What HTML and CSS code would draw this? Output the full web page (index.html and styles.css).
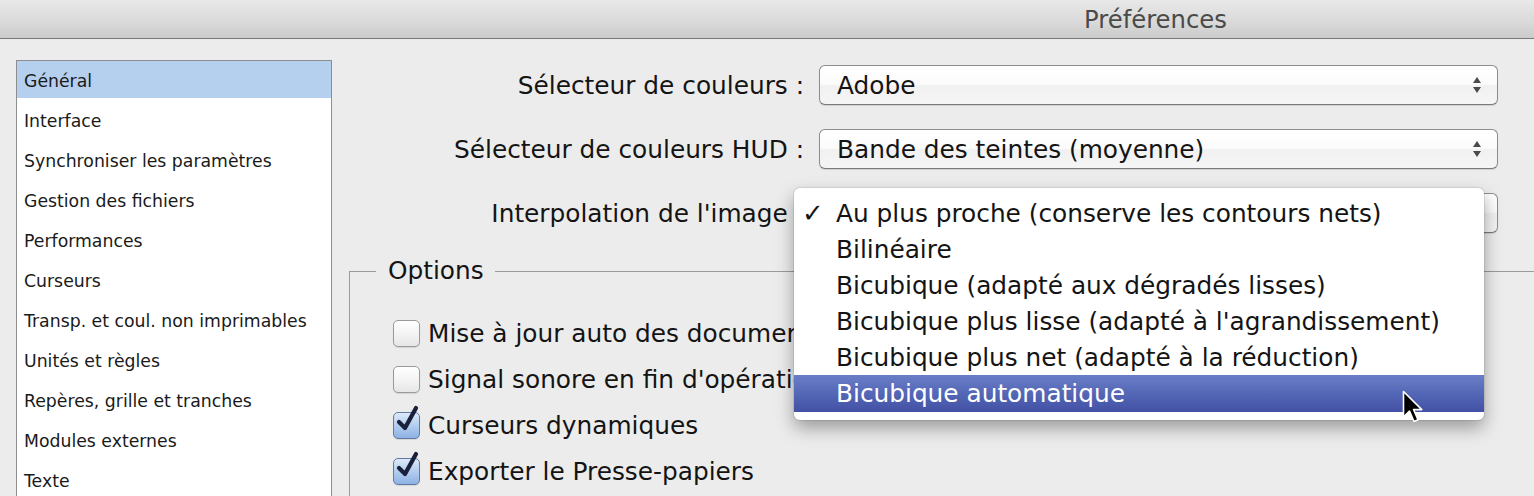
FILE: index.html
```html
<!DOCTYPE html>
<html lang="fr">
<head>
<meta charset="utf-8">
<title>Préférences</title>
<link rel="stylesheet" href="styles.css">
</head>
<body>
<div class="window">
  <header class="titlebar"><span class="title">Préférences</span></header>
  <div class="content">
    <ul class="sidebar">
      <li class="item selected">Général</li>
      <li class="item">Interface</li>
      <li class="item">Synchroniser les paramètres</li>
      <li class="item">Gestion des fichiers</li>
      <li class="item">Performances</li>
      <li class="item">Curseurs</li>
      <li class="item">Transp. et coul. non imprimables</li>
      <li class="item">Unités et règles</li>
      <li class="item">Repères, grille et tranches</li>
      <li class="item">Modules externes</li>
      <li class="item">Texte</li>
    </ul>
    <main class="main">
      <div class="form">
        <label class="label">Sélecteur de couleurs :</label>
        <div class="select"><span class="value">Adobe</span>
          <svg class="arrows" width="10" height="18" viewBox="0 0 10 18"><path d="M5 1 L9 7 L1 7 Z M1 11 L9 11 L5 17 Z" fill="#4a4a4a"/></svg>
        </div>
        <label class="label">Sélecteur de couleurs HUD :</label>
        <div class="select"><span class="value">Bande des teintes (moyenne)</span>
          <svg class="arrows" width="10" height="18" viewBox="0 0 10 18"><path d="M5 1 L9 7 L1 7 Z M1 11 L9 11 L5 17 Z" fill="#4a4a4a"/></svg>
        </div>
        <label class="label">Interpolation de l'image :</label>
        <div class="select"><span class="value">Au plus proche (conserve les contours nets)</span>
          <svg class="arrows" width="10" height="18" viewBox="0 0 10 18"><path d="M5 1 L9 7 L1 7 Z M1 11 L9 11 L5 17 Z" fill="#4a4a4a"/></svg>
        </div>
      </div>
      <fieldset class="options">
        <legend class="legend">Options</legend>
        <div class="checks">
          <div class="check"><span class="box"></span><span class="clabel">Mise à jour auto des documents ouverts</span></div>
          <div class="check"><span class="box"></span><span class="clabel">Signal sonore en fin d'opération</span></div>
          <div class="check"><span class="box checked"><svg class="tick" width="26" height="30" viewBox="0 0 26 30"><path d="M4 17 L10 23 L21 3" fill="none" stroke="#18203a" stroke-width="4.2" stroke-linecap="round" stroke-linejoin="round"/></svg></span><span class="clabel">Curseurs dynamiques</span></div>
          <div class="check"><span class="box checked"><svg class="tick" width="26" height="30" viewBox="0 0 26 30"><path d="M4 17 L10 23 L21 3" fill="none" stroke="#18203a" stroke-width="4.2" stroke-linecap="round" stroke-linejoin="round"/></svg></span><span class="clabel">Exporter le Presse-papiers</span></div>
        </div>
      </fieldset>
    </main>
  </div>
  <div class="popup">
    <div class="mitem"><span class="mark">✓</span>Au plus proche (conserve les contours nets)</div>
    <div class="mitem">Bilinéaire</div>
    <div class="mitem">Bicubique (adapté aux dégradés lisses)</div>
    <div class="mitem">Bicubique plus lisse (adapté à l'agrandissement)</div>
    <div class="mitem">Bicubique plus net (adapté à la réduction)</div>
    <div class="mitem active">Bicubique automatique</div>
  </div>
  <svg class="cursor" width="24" height="36" viewBox="0 0 24 36"><path d="M1.5 1.5 L1.5 27 L7.5 21 L12 31.5 L16 29.8 L11.6 19.6 L19.8 19.6 Z" fill="#000" stroke="#fff" stroke-width="1.6" stroke-linejoin="round"/></svg>
</div>
</body>
</html>
```

FILE: styles.css
```css
* { box-sizing: border-box; }
html, body { margin: 0; padding: 0; }
body {
  width: 1534px;
  height: 496px;
  overflow: hidden;
  background: #ececec;
  font-family: "DejaVu Sans", "Liberation Sans", sans-serif;
  color: #141414;
}
.window { position: relative; width: 1534px; height: 496px; overflow: hidden; }

.titlebar {
  height: 39px;
  border-bottom: 1px solid #7a7a7a;
  background: linear-gradient(#e8e8e8, #d9d9d9 60%, #cbcbcb);
  display: flex;
  align-items: center;
  padding-left: 1084px;
}
.title { font-size: 24.3px; color: #4a4a4a; }

.content { display: flex; align-items: flex-start; }

.sidebar {
  list-style: none;
  margin: 21px 0 0 16px;
  padding: 0;
  width: 316px;
  height: 460px;
  flex: none;
  background: #fff;
  border: 1px solid #8e8e8e;
}
.item {
  height: 37px;
  margin-bottom: 3px;
  padding: 2px 0 0 7px;
  display: flex;
  align-items: center;
  font-size: 17.3px;
  color: #1a1a1a;
  white-space: nowrap;
}
.item.selected { background: #b5cfee; }

.main { flex: 1; }

.form {
  margin-top: 26px;
  display: grid;
  grid-template-columns: 472px 679px;
  column-gap: 15px;
  grid-auto-rows: 40px;
  row-gap: 24px;
  align-items: center;
}
.label { text-align: right; font-size: 24.8px; white-space: nowrap; }
.select {
  height: 40px;
  border: 1px solid #8d8d8d;
  border-bottom-color: #7a7a7a;
  border-radius: 6px;
  background: linear-gradient(#ffffff, #fbfbfb 48%, #f1f1f1 52%, #f5f5f5);
  box-shadow: 0 1px 1px rgba(0,0,0,0.12);
  display: flex;
  align-items: center;
  justify-content: space-between;
  padding: 0 15px 0 17px;
}
.value { font-size: 24.8px; white-space: nowrap; }
.arrows { flex: none; }

.options {
  margin: 23px 0 0 17px;
  width: 1300px;
  height: 300px;
  border: 1px solid #9b9b9b;
  border-right: none;
  border-bottom: none;
  padding: 0 0 0 26px;
}
.legend { padding: 0 11px 0 12px; font-size: 24.8px; line-height: 30px; }
.checks { margin: 24px 0 0 17px; display: flex; flex-direction: column; }
.check { height: 46px; display: flex; align-items: center; gap: 8px; }
.box {
  position: relative;
  width: 27px;
  height: 27px;
  flex: none;
  border: 1px solid #9a9a9a;
  border-radius: 5px;
  background: linear-gradient(#ffffff, #f4f4f4 50%, #e6e6e6);
  box-shadow: 0 1px 1px rgba(0,0,0,0.1);
}
.box.checked {
  border-color: #6479a3;
  background: linear-gradient(#dde9f9, #b3cdef 50%, #8db2e4);
}
.tick { position: absolute; left: 1px; top: -8px; }
.clabel { font-size: 24.8px; white-space: nowrap; }

.popup {
  position: absolute;
  left: 794px;
  top: 188px;
  width: 690px;
  height: 232px;
  padding-top: 7px;
  background: #fff;
  border-radius: 6px;
  box-shadow: 0 0 0 1px rgba(0,0,0,0.08), 0 8px 18px rgba(0,0,0,0.35);
}
.mitem {
  position: relative;
  height: 36px;
  display: flex;
  align-items: center;
  padding-left: 42px;
  font-size: 24.8px;
  color: #141414;
  white-space: nowrap;
}
.mitem.active {
  background: linear-gradient(#6a7ec7, #5467b6 50%, #4350a4);
  color: #fff;
  height: 37px;
}
.mark { position: absolute; left: 8px; font-size: 26px; }

.cursor { position: absolute; left: 1402px; top: 390px; }
```
